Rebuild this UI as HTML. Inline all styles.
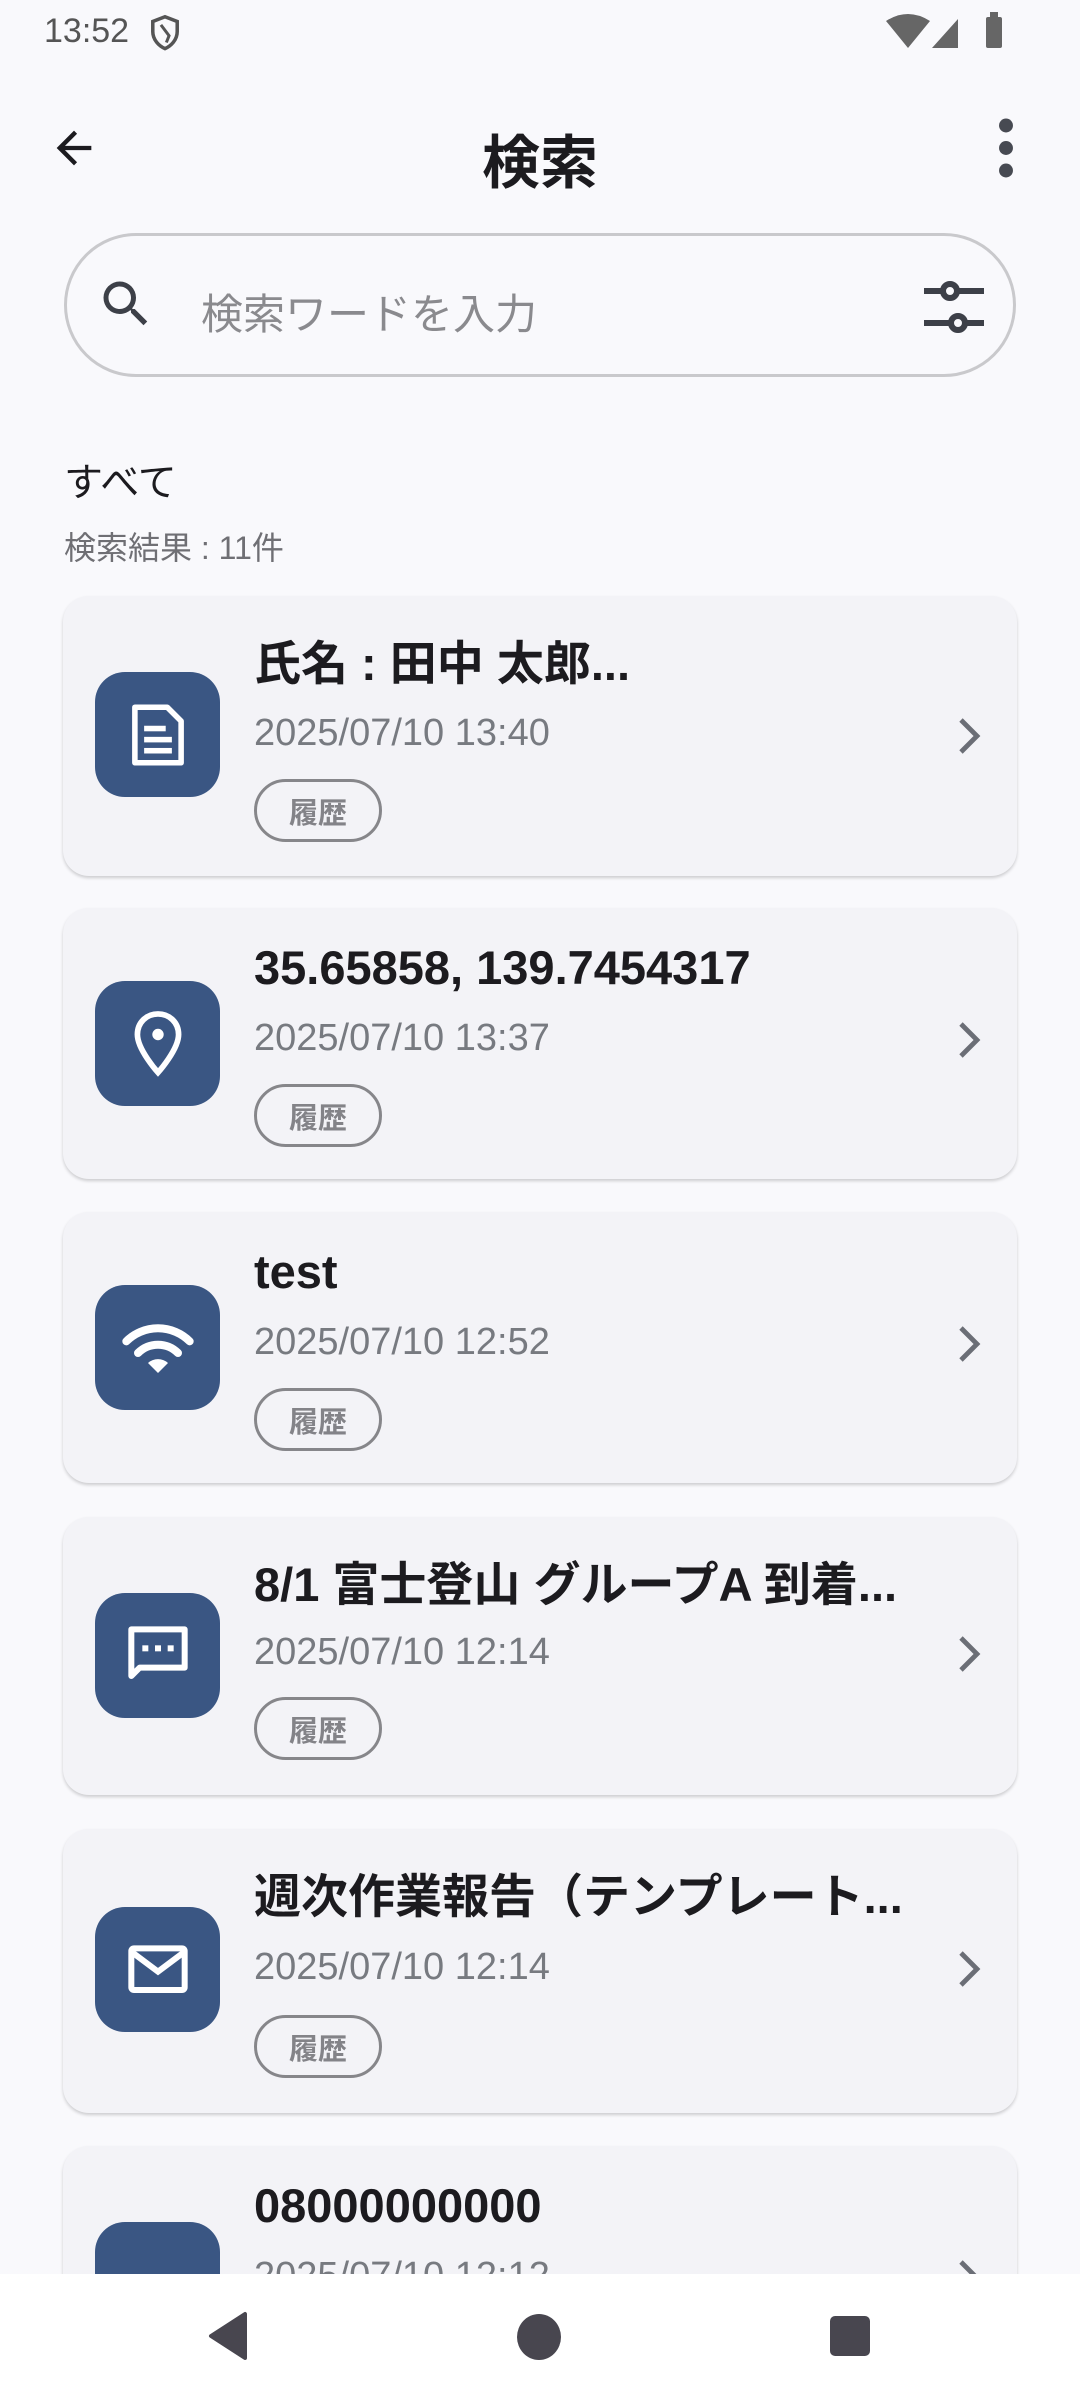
<!DOCTYPE html>
<html><head><meta charset="utf-8">
<style>
*{margin:0;padding:0;box-sizing:border-box}
body{width:1080px;height:2400px;background:#f9f9fc;font-family:"Liberation Sans","Noto Sans CJK JP",sans-serif;position:relative;overflow:hidden;color:#1c1b1f}
.abs{position:absolute}
.card{position:absolute;left:63px;width:954px;background:#f3f3f7;border-radius:26px;box-shadow:0 2px 3px rgba(0,0,0,0.18)}
.ic{position:absolute;left:32px;width:125px;height:125px;background:#3a5683;border-radius:30px;display:flex;align-items:center;justify-content:center}
.t{position:absolute;left:191px;font-size:47px;font-weight:bold;white-space:nowrap;color:#1c1b1f;line-height:1}
.d{position:absolute;left:191px;font-size:38px;color:#777a80;line-height:1}
.chip{position:absolute;left:191px;width:128px;height:63px;border:3px solid #86868a;border-radius:32px;font-size:29px;font-weight:bold;color:#838388;display:flex;align-items:center;justify-content:center}
.chev{position:absolute;left:888px}
</style></head><body>
<!-- status bar -->
<div class="abs" style="left:44px;top:12px;font-size:34px;color:#555">13:52</div>
<svg class="abs" style="left:148px;top:14px" width="34" height="38" viewBox="0 0 24 28"><path d="M12 2 L21 5.5 V13 C21 19 16.5 23.5 12 25.5 C7.5 23.5 3 19 3 13 V5.5Z" fill="none" stroke="#555" stroke-width="2.6"/><path d="M9 8 L15 16 L13 21" fill="none" stroke="#555" stroke-width="2.2"/></svg>
<svg class="abs" style="left:886px;top:12px" width="130" height="38" viewBox="0 0 130 38"><path d="M0 9 Q22 -5 44 9 L22 36Z" fill="#666"/><path d="M46 36 L72 7 V36Z" fill="#666"/><rect x="100" y="5" width="16" height="31" rx="2" fill="#666"/><rect x="104" y="0" width="8" height="6" fill="#666"/></svg>
<!-- top bar -->
<svg class="abs" style="left:48px;top:122px" width="52" height="52" viewBox="0 0 24 24"><path d="M20 11H7.83l5.59-5.59L12 4l-8 8 8 8 1.41-1.41L7.83 13H20v-2z" fill="#1c1b1f"/></svg>
<div class="abs" style="left:0;width:1080px;top:116px;text-align:center;font-size:58px;font-weight:bold">検索</div>
<svg class="abs" style="left:990px;top:118px" width="32" height="60" viewBox="0 0 16 56"><circle cx="8" cy="7" r="6.5" fill="#474a52"/><circle cx="8" cy="28" r="6.5" fill="#474a52"/><circle cx="8" cy="49" r="6.5" fill="#474a52"/></svg>
<!-- search -->
<div class="abs" style="left:64px;top:233px;width:952px;height:144px;border:3px solid #c9c9cc;border-radius:72px"></div>
<svg class="abs" style="left:96px;top:274px" width="60" height="60" viewBox="0 0 24 24"><path d="M15.5 14h-.79l-.28-.27A6.47 6.47 0 0 0 16 9.5 6.5 6.5 0 1 0 9.5 16c1.61 0 3.09-.59 4.23-1.57l.27.28v.79l5 4.99L20.49 19l-4.99-5zm-6 0C7.01 14 5 11.99 5 9.5S7.01 5 9.5 5 14 7.01 14 9.5 11.99 14 9.5 14z" fill="#3d4048"/></svg>
<div class="abs" style="left:201px;top:281px;font-size:42px;color:#8a8a8e">検索ワードを入力</div>
<svg class="abs" style="left:922px;top:276px" width="64" height="64" viewBox="0 0 64 64"><g fill="none" stroke="#3d4048" stroke-width="6"><line x1="2" y1="15" x2="20" y2="15"/><line x1="36" y1="15" x2="62" y2="15"/><circle cx="28" cy="15" r="7"/><line x1="2" y1="47" x2="28" y2="47"/><line x1="44" y1="47" x2="62" y2="47"/><circle cx="36" cy="47" r="7"/></g></svg>
<div class="abs" style="left:64px;top:452px;font-size:39px">すべて</div>
<div class="abs" style="left:64px;top:523px;font-size:32px;color:#6f6f74">検索結果 : 11件</div>

<!-- card 1 -->
<div class="card" style="top:596px;height:280px">
 <div class="ic" style="top:76px"><svg width="74" height="74" viewBox="0 0 24 24"><path d="M4.5 3h10.5l4.5 4.5V21h-15z" fill="none" stroke="#fff" stroke-width="1.8" stroke-linejoin="round"/><rect x="7.5" y="9" width="7" height="1.8" fill="#fff"/><rect x="7.5" y="12.6" width="9" height="1.8" fill="#fff"/><rect x="7.5" y="16.2" width="9" height="1.8" fill="#fff"/></svg></div>
 <div class="t" style="top:44px">氏名 : 田中 太郎...</div>
 <div class="d" style="top:118px">2025/07/10 13:40</div>
 <div class="chip" style="top:183px">履歴</div>
 <svg class="chev" style="top:118px" width="36" height="44" viewBox="0 0 18 22"><path d="M5 3l8 8-8 8" fill="none" stroke="#6b6e76" stroke-width="2.4"/></svg>
</div>
<!-- card 2 -->
<div class="card" style="top:908px;height:271px">
 <div class="ic" style="top:73px"><svg width="76" height="76" viewBox="0 0 24 24"><path d="M12 2.5C8.3 2.5 5.5 5.3 5.5 9c0 4.8 6.5 12 6.5 12s6.5-7.2 6.5-12c0-3.7-2.8-6.5-6.5-6.5z" fill="none" stroke="#fff" stroke-width="1.8"/><circle cx="12" cy="9" r="1.8" fill="#fff"/></svg></div>
 <div class="t" style="top:36px">35.65858, 139.7454317</div>
 <div class="d" style="top:111px">2025/07/10 13:37</div>
 <div class="chip" style="top:176px">履歴</div>
 <svg class="chev" style="top:110px" width="36" height="44" viewBox="0 0 18 22"><path d="M5 3l8 8-8 8" fill="none" stroke="#6b6e76" stroke-width="2.4"/></svg>
</div>
<!-- card 3 -->
<div class="card" style="top:1212px;height:271px">
 <div class="ic" style="top:73px"><svg width="80" height="80" viewBox="0 0 24 24"><path d="M2.5 10a13.5 13.5 0 0 1 19 0" fill="none" stroke="#fff" stroke-width="2.4" stroke-linecap="round"/><path d="M6 13.5a8.5 8.5 0 0 1 12 0" fill="none" stroke="#fff" stroke-width="2.4" stroke-linecap="round"/><path d="M9 16.5a4.5 4.5 0 0 1 6 0L12 19.5z" fill="#fff"/></svg></div>
 <div class="t" style="top:36px">test</div>
 <div class="d" style="top:111px">2025/07/10 12:52</div>
 <div class="chip" style="top:176px">履歴</div>
 <svg class="chev" style="top:110px" width="36" height="44" viewBox="0 0 18 22"><path d="M5 3l8 8-8 8" fill="none" stroke="#6b6e76" stroke-width="2.4"/></svg>
</div>
<!-- card 4 -->
<div class="card" style="top:1517px;height:278px">
 <div class="ic" style="top:76px"><svg width="80" height="80" viewBox="0 0 24 24"><path d="M4 4h16v11.5H6.5L4 18z" fill="none" stroke="#fff" stroke-width="1.8" stroke-linejoin="round"/><rect x="7.3" y="8.8" width="1.8" height="1.8" fill="#fff"/><rect x="11.1" y="8.8" width="1.8" height="1.8" fill="#fff"/><rect x="14.9" y="8.8" width="1.8" height="1.8" fill="#fff"/></svg></div>
 <div class="t" style="top:44px">8/1 富士登山 グループA 到着...</div>
 <div class="d" style="top:116px">2025/07/10 12:14</div>
 <div class="chip" style="top:180px">履歴</div>
 <svg class="chev" style="top:115px" width="36" height="44" viewBox="0 0 18 22"><path d="M5 3l8 8-8 8" fill="none" stroke="#6b6e76" stroke-width="2.4"/></svg>
</div>
<!-- card 5 -->
<div class="card" style="top:1829px;height:284px">
 <div class="ic" style="top:78px"><svg width="80" height="80" viewBox="0 0 24 24"><rect x="4" y="5.5" width="16" height="12.5" rx="0.8" fill="none" stroke="#fff" stroke-width="1.8"/><path d="M4 6.5l8 6 8-6" fill="none" stroke="#fff" stroke-width="1.8"/></svg></div>
 <div class="t" style="top:44px">週次作業報告（テンプレート...</div>
 <div class="d" style="top:119px">2025/07/10 12:14</div>
 <div class="chip" style="top:186px">履歴</div>
 <svg class="chev" style="top:118px" width="36" height="44" viewBox="0 0 18 22"><path d="M5 3l8 8-8 8" fill="none" stroke="#6b6e76" stroke-width="2.4"/></svg>
</div>
<!-- card 6 -->
<div class="card" style="top:2146px;height:200px">
 <div class="ic" style="top:76px"></div>
 <div class="t" style="top:36px">08000000000</div>
 <div class="d" style="top:111px">2025/07/10 12:12</div>
 <svg class="chev" style="top:110px" width="36" height="44" viewBox="0 0 18 22"><path d="M5 3l8 8-8 8" fill="none" stroke="#6b6e76" stroke-width="2.4"/></svg>
</div>
<!-- nav bar -->
<div class="abs" style="left:0;top:2274px;width:1080px;height:126px;background:#fff"></div>
<svg class="abs" style="left:205px;top:2310px" width="48" height="52" viewBox="0 0 48 52"><path d="M40 4 V48 L6 26Z" fill="#48464f" stroke="#48464f" stroke-width="4" stroke-linejoin="round"/></svg>
<div class="abs" style="left:517px;top:2314px;width:44px;height:46px;border-radius:50%;background:#48464f"></div>
<div class="abs" style="left:830px;top:2316px;width:40px;height:40px;border-radius:5px;background:#48464f"></div>
</body></html>
